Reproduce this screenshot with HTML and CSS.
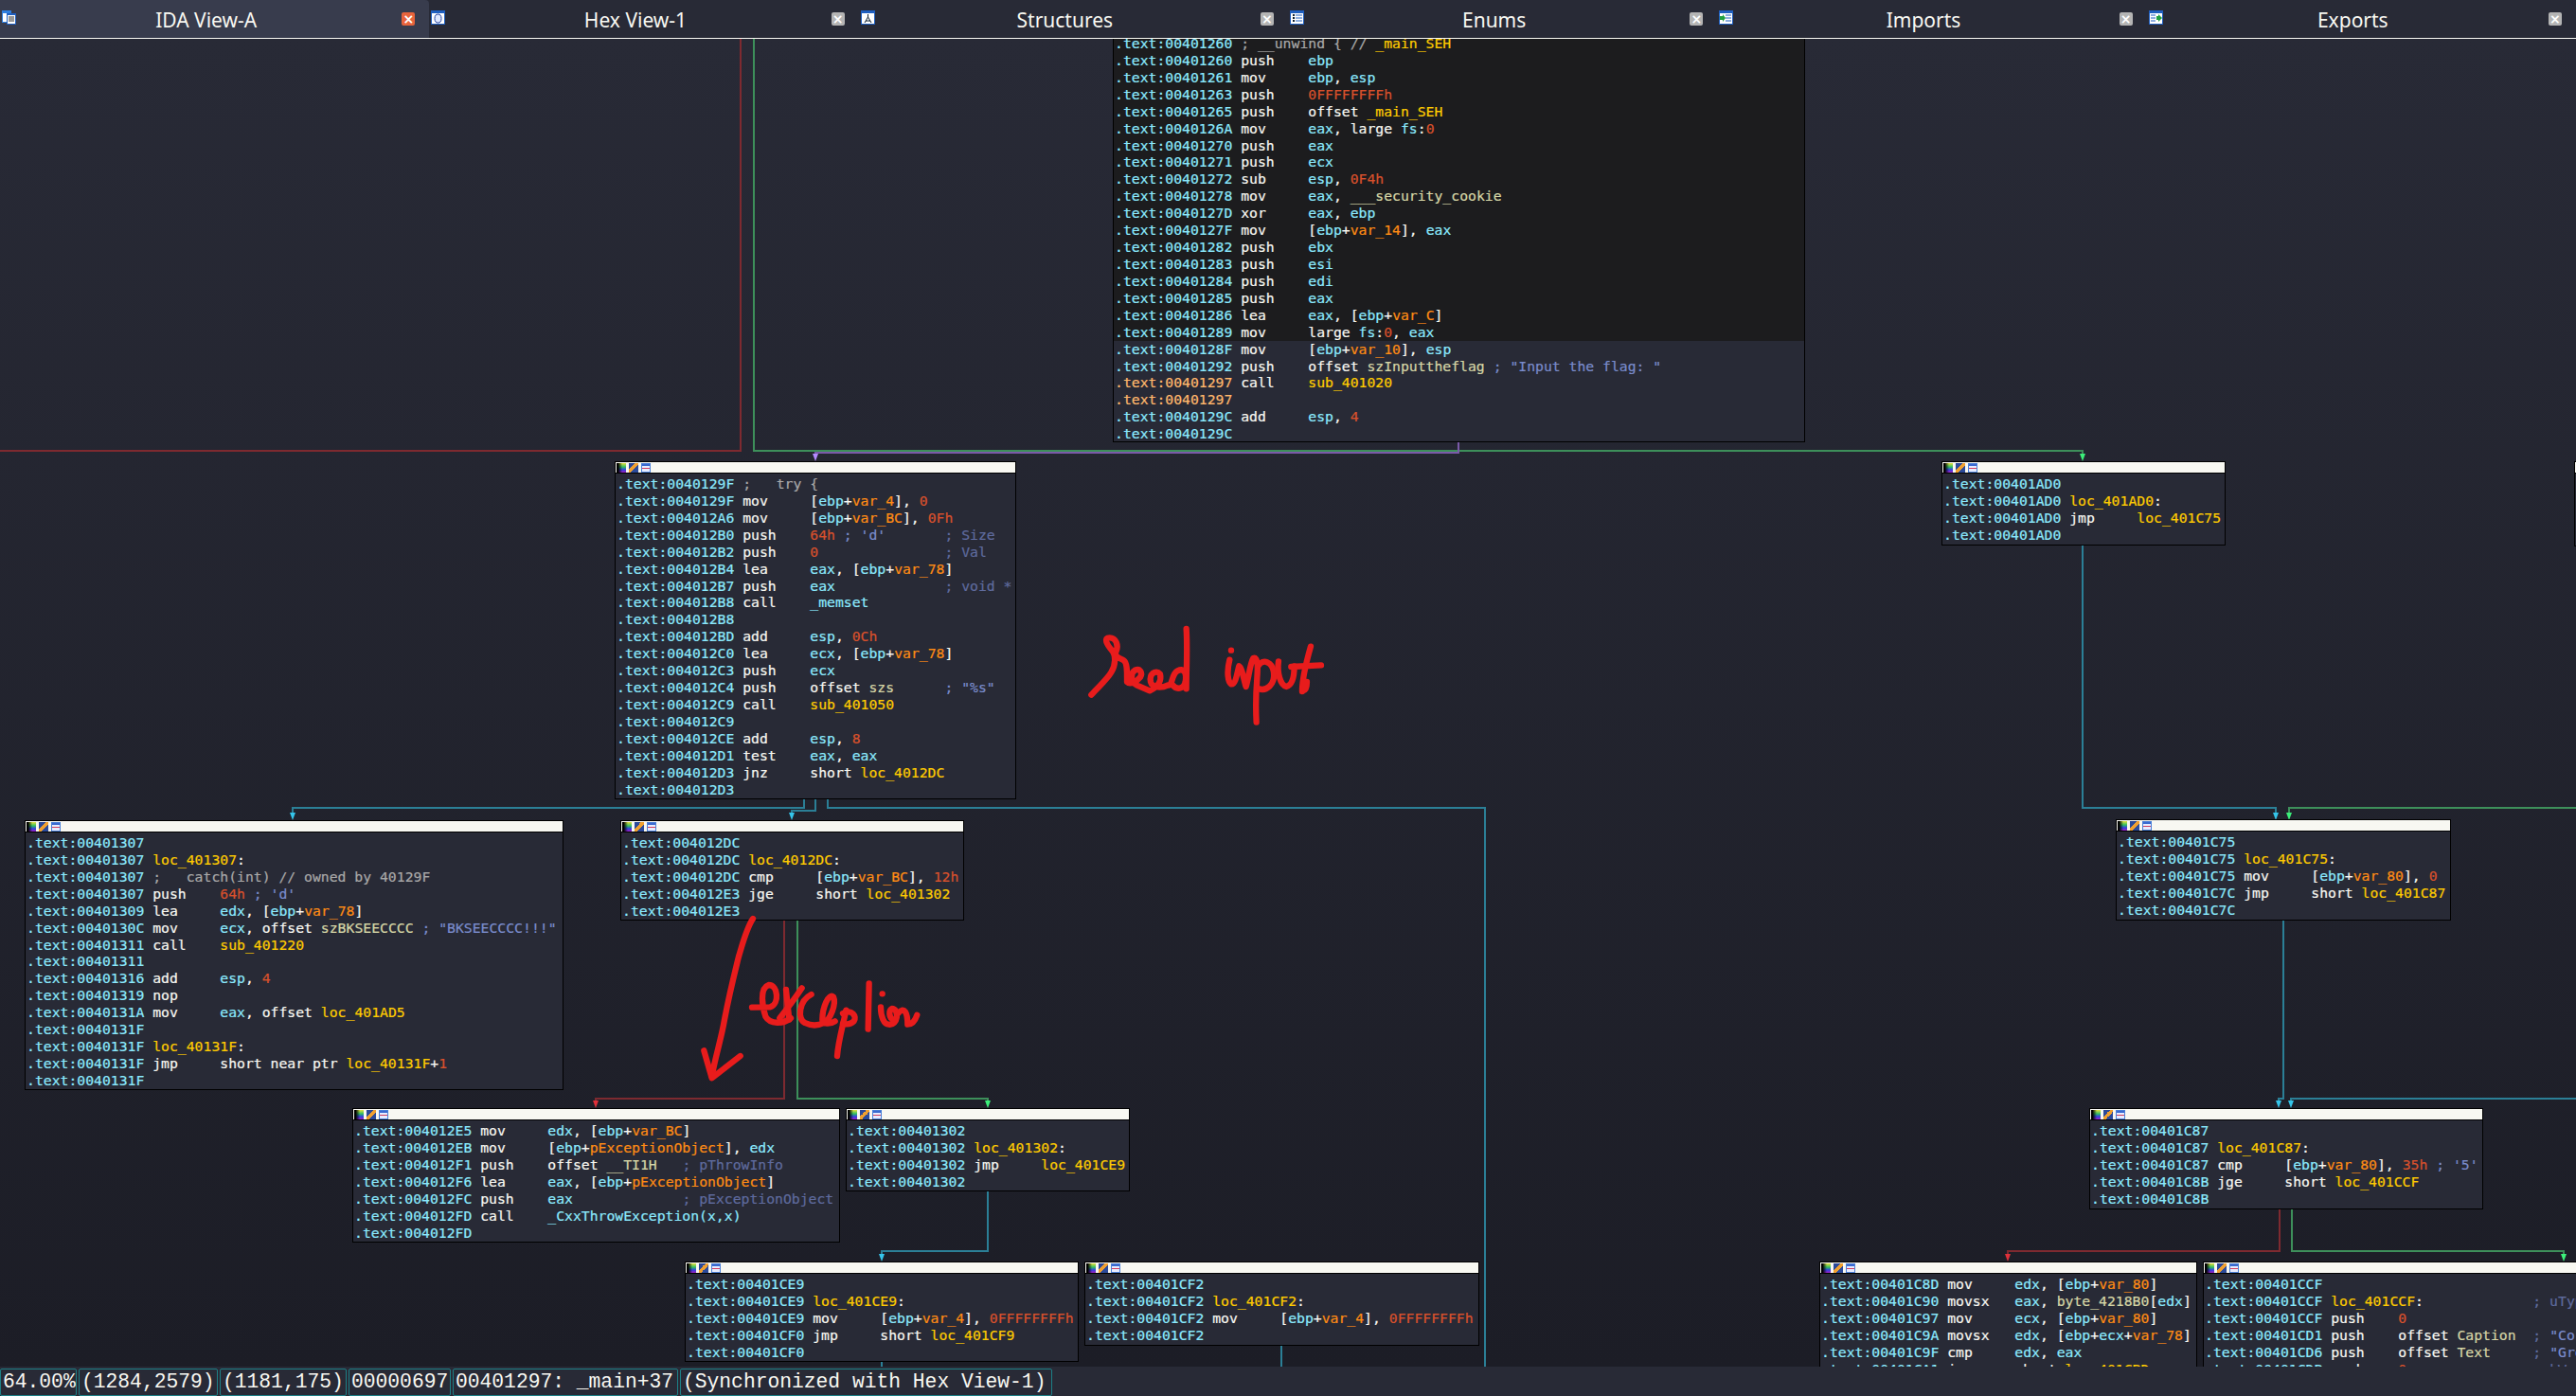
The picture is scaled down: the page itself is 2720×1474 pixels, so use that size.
FILE: index.html
```html
<!DOCTYPE html>
<html>
<head>
    <title>IDA View-A</title>
    <link rel="stylesheet" href="styles.css">
</head>
<body>
    <div class="tabs">
        <div class="tab active">
            <svg class="tab-icon" viewBox="0 0 15 15"><rect x="0" y="0" width="10" height="13" fill="#2f7fe0"/><rect x="1" y="3" width="8" height="9" fill="#fff"/><rect x="5" y="3" width="10" height="12" fill="#1f5fc0"/><rect x="6" y="5" width="8" height="9" fill="#fff"/><path d="M7 7h6M7 9h6M7 11h6" stroke="#333" stroke-width="1"/></svg>
            <span class="tab-title">IDA View-A</span>
            <span class="tab-close">×</span>
        </div>
        <div class="tab">
            <svg class="tab-icon" viewBox="0 0 15 15"><rect width="15" height="15" fill="#1f5fc0"/><rect x="1" y="3" width="13" height="11" fill="#fff"/><ellipse cx="7.5" cy="8.5" rx="3.5" ry="4.5" fill="#dfe8ff" stroke="#1f3fa0"/></svg>
            <span class="tab-title">Hex View-1</span>
            <span class="tab-close">×</span>
        </div>
        <div class="tab">
            <svg class="tab-icon" viewBox="0 0 15 15"><rect width="15" height="15" fill="#1f5fc0"/><rect x="1" y="3" width="13" height="11" fill="#fff"/><path d="M7.5 4v3M4 13l3.5-6 3.500 6M5 11h5" stroke="#123" fill="none"/></svg>
            <span class="tab-title">Structures</span>
            <span class="tab-close">×</span>
        </div>
        <div class="tab">
            <svg class="tab-icon" viewBox="0 0 15 15"><rect width="15" height="15" fill="#1f5fc0"/><rect x="1" y="3" width="13" height="11" fill="#fff"/><path d="M6 5h7M6 8h7M6 11h7" stroke="#1f5fc0"/><rect x="3" y="4" width="2" height="2" fill="#123"/><rect x="3" y="7" width="2" height="2" fill="#123"/><rect x="3" y="10" width="2" height="2" fill="#123"/></svg>
            <span class="tab-title">Enums</span>
            <span class="tab-close">×</span>
        </div>
        <div class="tab">
            <svg class="tab-icon" viewBox="0 0 15 15"><rect width="15" height="15" fill="#1f5fc0"/><rect x="1" y="3" width="13" height="11" fill="#fff"/><path d="M7 5h6M7 8h6M7 11h6" stroke="#1f5fc0"/><path d="M1 6h3V4l3 4-3 4v-2H1z" fill="#20a040"/></svg>
            <span class="tab-title">Imports</span>
            <span class="tab-close">×</span>
        </div>
        <div class="tab">
            <svg class="tab-icon" viewBox="0 0 15 15"><rect width="15" height="15" fill="#1f5fc0"/><rect x="1" y="3" width="13" height="11" fill="#fff"/><path d="M2 5h5M2 8h5M2 11h5" stroke="#1f5fc0"/><path d="M8 6h2V4l4 4-4 4v-2H8z" fill="#20a040"/></svg>
            <span class="tab-title">Exports</span>
            <span class="tab-close">×</span>
        </div>
    </div>

    <div class="graph">
        <!-- edges, drawn in page coordinates -->
        <svg class="layer" viewBox="0 41 2720 1402">
            <g class="edge red">
                <path d="M782 41V476H0"/>
                <path d="M828 972V1160H629V1164"/>
                <path d="M2407 1277V1321H2120V1325"/>
            </g>
            <g class="edge green">
                <path d="M796 41V476H2199V481"/>
                <path d="M842 972V1160H1043V1164"/>
                <path d="M2417 858V853H2720"/>
                <path d="M2420 1277V1321H2707V1325"/>
            </g>
            <g class="edge purple">
                <path d="M1540 467V478H861V481"/>
            </g>
            <g class="edge teal">
                <path d="M849 844V853H309V859"/>
                <path d="M861 844V856H836V860"/>
                <path d="M874 844V853H1568V1443"/>
                <path d="M1043 1258V1321H931V1326"/>
                <path d="M931 1438V1443"/>
                <path d="M1353 1421V1443"/>
                <path d="M2199 576V853H2403V859"/>
                <path d="M2411 972V1160H2406V1164"/>
                <path d="M2419 1164V1160H2720"/>
            </g>
            <g class="head red">
                <path d="M626 1162h6l-3 8z"/>
                <path d="M2117 1324h6l-3 8z"/>
            </g>
            <g class="head green">
                <path d="M2196 479h6l-3 8z"/>
                <path d="M1040 1162h6l-3 8z"/>
                <path d="M2414 858h6l-3 8z"/>
                <path d="M2704 1324h6l-3 8z"/>
            </g>
            <g class="head purple">
                <path d="M858 479h6l-3 8z"/>
            </g>
            <g class="head teal">
                <path d="M306 858h6l-3 8z"/>
                <path d="M833 858h6l-3 8z"/>
                <path d="M928 1324h6l-3 8z"/>
                <path d="M2400 858h6l-3 8z"/>
                <path d="M2403 1162h6l-3 8z"/>
                <path d="M2416 1162h6l-3 8z"/>
            </g>
        </svg>

        <div class="node n-main">
            <div class="code">
                <div class="dim">
<div><i class="a">.text:00401260</i> <i class="g">; __unwind { // </i><i class="l">_main_SEH</i></div>
<div><i class="a">.text:00401260</i> push    <i class="r">ebp</i></div>
<div><i class="a">.text:00401261</i> mov     <i class="r">ebp</i>, <i class="r">esp</i></div>
<div><i class="a">.text:00401263</i> push    <i class="n">0FFFFFFFFh</i></div>
<div><i class="a">.text:00401265</i> push    offset <i class="l">_main_SEH</i></div>
<div><i class="a">.text:0040126A</i> mov     <i class="r">eax</i>, large <i class="r">fs</i>:<i class="n">0</i></div>
<div><i class="a">.text:00401270</i> push    <i class="r">eax</i></div>
<div><i class="a">.text:00401271</i> push    <i class="r">ecx</i></div>
<div><i class="a">.text:00401272</i> sub     <i class="r">esp</i>, <i class="n">0F4h</i></div>
<div><i class="a">.text:00401278</i> mov     <i class="r">eax</i>, <i class="d">___security_cookie</i></div>
<div><i class="a">.text:0040127D</i> xor     <i class="r">eax</i>, <i class="r">ebp</i></div>
<div><i class="a">.text:0040127F</i> mov     [<i class="r">ebp</i>+<i class="v">var_14</i>], <i class="r">eax</i></div>
<div><i class="a">.text:00401282</i> push    <i class="r">ebx</i></div>
<div><i class="a">.text:00401283</i> push    <i class="r">esi</i></div>
<div><i class="a">.text:00401284</i> push    <i class="r">edi</i></div>
<div><i class="a">.text:00401285</i> push    <i class="r">eax</i></div>
<div><i class="a">.text:00401286</i> lea     <i class="r">eax</i>, [<i class="r">ebp</i>+<i class="v">var_C</i>]</div>
<div><i class="a">.text:00401289</i> mov     large <i class="r">fs</i>:<i class="n">0</i>, <i class="r">eax</i></div>
                </div>
<div><i class="a">.text:0040128F</i> mov     [<i class="r">ebp</i>+<i class="v">var_10</i>], <i class="r">esp</i></div>
<div><i class="a">.text:00401292</i> push    offset <i class="d">szInputtheflag</i> <i class="s">; "Input the flag: "</i></div>
<div><i class="o">.text:00401297</i> call    <i class="l">sub_401020</i></div>
<div><i class="o">.text:00401297</i></div>
<div><i class="a">.text:0040129C</i> add     <i class="r">esp</i>, <i class="n">4</i></div>
<div><i class="a">.text:0040129C</i></div>
            </div>
        </div>

        <div class="node n-try">
            <div class="node-head"><span class="hi hi-color"></span><span class="hi hi-pen"></span><span class="hi hi-win"></span></div>
            <div class="code">
<div><i class="a">.text:0040129F</i> <i class="g">;   try {</i></div>
<div><i class="a">.text:0040129F</i> mov     [<i class="r">ebp</i>+<i class="v">var_4</i>], <i class="n">0</i></div>
<div><i class="a">.text:004012A6</i> mov     [<i class="r">ebp</i>+<i class="v">var_BC</i>], <i class="n">0Fh</i></div>
<div><i class="a">.text:004012B0</i> push    <i class="n">64h</i> <i class="s">; 'd'</i>       <i class="c">; Size</i></div>
<div><i class="a">.text:004012B2</i> push    <i class="n">0</i>               <i class="c">; Val</i></div>
<div><i class="a">.text:004012B4</i> lea     <i class="r">eax</i>, [<i class="r">ebp</i>+<i class="v">var_78</i>]</div>
<div><i class="a">.text:004012B7</i> push    <i class="r">eax</i>             <i class="c">; void *</i></div>
<div><i class="a">.text:004012B8</i> call    <i class="r">_memset</i></div>
<div><i class="a">.text:004012B8</i></div>
<div><i class="a">.text:004012BD</i> add     <i class="r">esp</i>, <i class="n">0Ch</i></div>
<div><i class="a">.text:004012C0</i> lea     <i class="r">ecx</i>, [<i class="r">ebp</i>+<i class="v">var_78</i>]</div>
<div><i class="a">.text:004012C3</i> push    <i class="r">ecx</i></div>
<div><i class="a">.text:004012C4</i> push    offset <i class="d">szs</i>      <i class="s">; "%s"</i></div>
<div><i class="a">.text:004012C9</i> call    <i class="l">sub_401050</i></div>
<div><i class="a">.text:004012C9</i></div>
<div><i class="a">.text:004012CE</i> add     <i class="r">esp</i>, <i class="n">8</i></div>
<div><i class="a">.text:004012D1</i> test    <i class="r">eax</i>, <i class="r">eax</i></div>
<div><i class="a">.text:004012D3</i> jnz     short <i class="l">loc_4012DC</i></div>
<div><i class="a">.text:004012D3</i></div>
            </div>
        </div>

        <div class="node n-catch">
            <div class="node-head"><span class="hi hi-color"></span><span class="hi hi-pen"></span><span class="hi hi-win"></span></div>
            <div class="code">
<div><i class="a">.text:00401307</i></div>
<div><i class="a">.text:00401307</i> <i class="l">loc_401307</i>:</div>
<div><i class="a">.text:00401307</i> <i class="g">;   catch(int) // owned by 40129F</i></div>
<div><i class="a">.text:00401307</i> push    <i class="n">64h</i> <i class="s">; 'd'</i></div>
<div><i class="a">.text:00401309</i> lea     <i class="r">edx</i>, [<i class="r">ebp</i>+<i class="v">var_78</i>]</div>
<div><i class="a">.text:0040130C</i> mov     <i class="r">ecx</i>, offset <i class="d">szBKSEECCCC</i> <i class="s">; "BKSEECCCC!!!"</i></div>
<div><i class="a">.text:00401311</i> call    <i class="l">sub_401220</i></div>
<div><i class="a">.text:00401311</i></div>
<div><i class="a">.text:00401316</i> add     <i class="r">esp</i>, <i class="n">4</i></div>
<div><i class="a">.text:00401319</i> nop</div>
<div><i class="a">.text:0040131A</i> mov     <i class="r">eax</i>, offset <i class="l">loc_401AD5</i></div>
<div><i class="a">.text:0040131F</i></div>
<div><i class="a">.text:0040131F</i> <i class="l">loc_40131F</i>:</div>
<div><i class="a">.text:0040131F</i> jmp     short near ptr <i class="l">loc_40131F</i>+<i class="n">1</i></div>
<div><i class="a">.text:0040131F</i></div>
            </div>
        </div>

        <div class="node n-12dc">
            <div class="node-head"><span class="hi hi-color"></span><span class="hi hi-pen"></span><span class="hi hi-win"></span></div>
            <div class="code">
<div><i class="a">.text:004012DC</i></div>
<div><i class="a">.text:004012DC</i> <i class="l">loc_4012DC</i>:</div>
<div><i class="a">.text:004012DC</i> cmp     [<i class="r">ebp</i>+<i class="v">var_BC</i>], <i class="n">12h</i></div>
<div><i class="a">.text:004012E3</i> jge     short <i class="l">loc_401302</i></div>
<div><i class="a">.text:004012E3</i></div>
            </div>
        </div>

        <div class="node n-12e5">
            <div class="node-head"><span class="hi hi-color"></span><span class="hi hi-pen"></span><span class="hi hi-win"></span></div>
            <div class="code">
<div><i class="a">.text:004012E5</i> mov     <i class="r">edx</i>, [<i class="r">ebp</i>+<i class="v">var_BC</i>]</div>
<div><i class="a">.text:004012EB</i> mov     [<i class="r">ebp</i>+<i class="v">pExceptionObject</i>], <i class="r">edx</i></div>
<div><i class="a">.text:004012F1</i> push    offset <i class="d">__TI1H</i>   <i class="c">; pThrowInfo</i></div>
<div><i class="a">.text:004012F6</i> lea     <i class="r">eax</i>, [<i class="r">ebp</i>+<i class="v">pExceptionObject</i>]</div>
<div><i class="a">.text:004012FC</i> push    <i class="r">eax</i>             <i class="c">; pExceptionObject</i></div>
<div><i class="a">.text:004012FD</i> call    <i class="r">_CxxThrowException(x,x)</i></div>
<div><i class="a">.text:004012FD</i></div>
            </div>
        </div>

        <div class="node n-1302">
            <div class="node-head"><span class="hi hi-color"></span><span class="hi hi-pen"></span><span class="hi hi-win"></span></div>
            <div class="code">
<div><i class="a">.text:00401302</i></div>
<div><i class="a">.text:00401302</i> <i class="l">loc_401302</i>:</div>
<div><i class="a">.text:00401302</i> jmp     <i class="l">loc_401CE9</i></div>
<div><i class="a">.text:00401302</i></div>
            </div>
        </div>

        <div class="node n-1ce9">
            <div class="node-head"><span class="hi hi-color"></span><span class="hi hi-pen"></span><span class="hi hi-win"></span></div>
            <div class="code">
<div><i class="a">.text:00401CE9</i></div>
<div><i class="a">.text:00401CE9</i> <i class="l">loc_401CE9</i>:</div>
<div><i class="a">.text:00401CE9</i> mov     [<i class="r">ebp</i>+<i class="v">var_4</i>], <i class="n">0FFFFFFFFh</i></div>
<div><i class="a">.text:00401CF0</i> jmp     short <i class="l">loc_401CF9</i></div>
<div><i class="a">.text:00401CF0</i></div>
            </div>
        </div>

        <div class="node n-1cf2">
            <div class="node-head"><span class="hi hi-color"></span><span class="hi hi-pen"></span><span class="hi hi-win"></span></div>
            <div class="code">
<div><i class="a">.text:00401CF2</i></div>
<div><i class="a">.text:00401CF2</i> <i class="l">loc_401CF2</i>:</div>
<div><i class="a">.text:00401CF2</i> mov     [<i class="r">ebp</i>+<i class="v">var_4</i>], <i class="n">0FFFFFFFFh</i></div>
<div><i class="a">.text:00401CF2</i></div>
            </div>
        </div>

        <div class="node n-1ad0">
            <div class="node-head"><span class="hi hi-color"></span><span class="hi hi-pen"></span><span class="hi hi-win"></span></div>
            <div class="code">
<div><i class="a">.text:00401AD0</i></div>
<div><i class="a">.text:00401AD0</i> <i class="l">loc_401AD0</i>:</div>
<div><i class="a">.text:00401AD0</i> jmp     <i class="l">loc_401C75</i></div>
<div><i class="a">.text:00401AD0</i></div>
            </div>
        </div>

        <div class="node n-edge">
            <div class="node-head"></div>
        </div>

        <div class="node n-1c75">
            <div class="node-head"><span class="hi hi-color"></span><span class="hi hi-pen"></span><span class="hi hi-win"></span></div>
            <div class="code">
<div><i class="a">.text:00401C75</i></div>
<div><i class="a">.text:00401C75</i> <i class="l">loc_401C75</i>:</div>
<div><i class="a">.text:00401C75</i> mov     [<i class="r">ebp</i>+<i class="v">var_80</i>], <i class="n">0</i></div>
<div><i class="a">.text:00401C7C</i> jmp     short <i class="l">loc_401C87</i></div>
<div><i class="a">.text:00401C7C</i></div>
            </div>
        </div>

        <div class="node n-1c87">
            <div class="node-head"><span class="hi hi-color"></span><span class="hi hi-pen"></span><span class="hi hi-win"></span></div>
            <div class="code">
<div><i class="a">.text:00401C87</i></div>
<div><i class="a">.text:00401C87</i> <i class="l">loc_401C87</i>:</div>
<div><i class="a">.text:00401C87</i> cmp     [<i class="r">ebp</i>+<i class="v">var_80</i>], <i class="n">35h</i> <i class="s">; '5'</i></div>
<div><i class="a">.text:00401C8B</i> jge     short <i class="l">loc_401CCF</i></div>
<div><i class="a">.text:00401C8B</i></div>
            </div>
        </div>

        <div class="node n-1c8d">
            <div class="node-head"><span class="hi hi-color"></span><span class="hi hi-pen"></span><span class="hi hi-win"></span></div>
            <div class="code">
<div><i class="a">.text:00401C8D</i> mov     <i class="r">edx</i>, [<i class="r">ebp</i>+<i class="v">var_80</i>]</div>
<div><i class="a">.text:00401C90</i> movsx   <i class="r">eax</i>, <i class="d">byte_4218B0</i>[<i class="r">edx</i>]</div>
<div><i class="a">.text:00401C97</i> mov     <i class="r">ecx</i>, [<i class="r">ebp</i>+<i class="v">var_80</i>]</div>
<div><i class="a">.text:00401C9A</i> movsx   <i class="r">edx</i>, [<i class="r">ebp</i>+<i class="r">ecx</i>+<i class="v">var_78</i>]</div>
<div><i class="a">.text:00401C9F</i> cmp     <i class="r">edx</i>, <i class="r">eax</i></div>
<div><i class="a">.text:00401CA1</i> jnz     short <i class="l">loc_401CBD</i></div>
            </div>
        </div>

        <div class="node n-1ccf">
            <div class="node-head"><span class="hi hi-color"></span><span class="hi hi-pen"></span><span class="hi hi-win"></span></div>
            <div class="code">
<div><i class="a">.text:00401CCF</i></div>
<div><i class="a">.text:00401CCF</i> <i class="l">loc_401CCF</i>:             <i class="c">; uType</i></div>
<div><i class="a">.text:00401CCF</i> push    <i class="n">0</i></div>
<div><i class="a">.text:00401CD1</i> push    offset <i class="d">Caption</i>  <i class="c">; </i><i class="s">"Correct"</i></div>
<div><i class="a">.text:00401CD6</i> push    offset <i class="d">Text</i>     <i class="c">; </i><i class="s">"Great"</i></div>
<div><i class="a">.text:00401CDB</i> push    <i class="n">0</i>               <i class="c">; hWnd</i></div>
            </div>
        </div>

        <!-- the red pen notes on top of everything -->
        <svg class="layer" viewBox="0 41 2720 1402">
            <g class="pen" transform="translate(1050 640) scale(0.3333)">
                <path d="M307 281C330 255 355 235 370 210C385 185 385 155 372 140C355 120 345 100 365 100C385 100 395 125 385 145C378 158 395 165 410 172C422 180 420 215 420 240C430 250 450 240 462 225C470 212 462 195 445 203C430 212 432 240 450 250L492 268C520 255 530 235 525 215C510 200 490 215 495 240C500 260 530 260 550 250C565 255 560 215 580 205C600 195 610 210 605 240C600 265 575 265 565 250"/>
                <path d="M608 72C612 130 608 200 608 262"/>
                <path d="M750 140h.1"/>
                <path d="M745 170C735 210 740 240 750 247C765 250 770 205 775 190C785 195 790 235 797 255C805 230 810 180 820 165C835 160 835 190 832 230C828 280 828 330 830 368"/>
                <path d="M835 190C850 165 880 175 885 210C890 250 860 270 838 262"/>
                <path d="M900 175C895 210 905 250 925 255C945 250 950 220 950 190"/>
                <path d="M1002 128C990 170 975 230 975 270C975 265 990 275 990 240"/>
                <path d="M940 192L1035 187"/>
            </g>
            <g class="pen" transform="translate(700 950) scale(0.3333)">
                <path d="M285 60C265 90 255 130 240 180C225 240 210 300 195 380C185 440 165 500 155 560"/>
                <path d="M130 478L155 565L245 495"/>
                <path d="M282 341L340 340C370 330 365 270 335 270C305 280 315 340 325 370C340 395 380 395 405 375"/>
                <path d="M370 375C390 350 420 310 440 280"/>
                <path d="M390 285L400 380"/>
                <path d="M470 300C430 320 425 380 450 390C470 400 490 400 510 390C530 380 550 330 540 308C525 295 505 340 505 380C505 395 530 395 545 385"/>
                <path d="M580 350C570 400 555 450 552 495"/>
                <path d="M570 360C600 345 615 370 605 385C595 395 580 395 570 392"/>
                <path d="M653 265L650 410"/>
                <path d="M695 298h.1"/>
                <path d="M690 340C690 370 700 395 715 395C745 400 750 345 725 345C715 350 715 375 730 380"/>
                <path d="M745 360C765 335 775 360 775 395C790 395 800 380 805 365"/>
            </g>
        </svg>
    </div>

    <div class="status">
        <span class="seg seg-zoom">64.00%</span>
        <span class="seg seg-pos">(1284,2579)</span>
        <span class="seg seg-size">(1181,175)</span>
        <span class="seg seg-off">00000697</span>
        <span class="seg seg-addr">00401297: _main+37</span>
        <span class="seg seg-sync">(Synchronized with Hex View-1)</span>
    </div>
</body>
</html>
```

FILE: styles.css
```css
html, body {
    margin: 0;
    height: 100%;
    overflow: hidden;
}
body {
    display: flex;
    flex-direction: column;
    background: #282a36;
    color: #f8f8f2;
}

/* tab bar */
.tabs {
    display: flex;
    height: 41px;
    flex: none;
    box-sizing: border-box;
    border-bottom: 1px solid #f8f8f2;
    background: #282a36;
}
.tab {
    flex: 1;
    display: flex;
    align-items: flex-start;
    padding: 0 15px 0 2px;
}
.tab.active {
    background: #383c4d;
    border-top-right-radius: 4px;
}
.tab-icon {
    width: 15px;
    height: 15px;
    margin-top: 11px;
    flex: none;
}
.tab-title {
    flex: 1;
    padding-right: 6px;
    text-align: center;
    font: 21px/42px "Noto Sans", sans-serif;
}
.tab-close {
    width: 14px;
    height: 14px;
    margin-top: 13px;
    border-radius: 2px;
    background: #b4b4b4;
    color: #fff;
    font: bold 14px/14px "DejaVu Sans", sans-serif;
    text-align: center;
}
.active .tab-close {
    background: #e8643c;
}

/* graph area */
.graph {
    flex: 1;
    position: relative;
    overflow: hidden;
    background: linear-gradient(#282a36, #1c1d26);
}
.layer {
    position: absolute;
    left: 0;
    top: 0;
    width: 2720px;
    height: 1402px;
}
.edge path {
    fill: none;
    stroke-width: 2;
    shape-rendering: crispEdges;
}
.edge.red path { stroke: #7e2a30; }
.edge.green path { stroke: #3d8f5a; }
.edge.purple path { stroke: #7a5aa8; }
.edge.teal path { stroke: #2b7f96; }
.head.red path { fill: #e0303a; }
.head.green path { fill: #3cf07a; }
.head.purple path { fill: #b48aff; }
.head.teal path { fill: #35c5ea; }
.pen path {
    fill: none;
    stroke: #e81c1c;
    stroke-width: 19;
    stroke-linecap: round;
    stroke-linejoin: round;
}

/* flow chart nodes */
.node {
    position: absolute;
    box-sizing: border-box;
    overflow: hidden;
    border: 1px solid #000;
    background: #282a36;
}
.node-head {
    display: flex;
    gap: 3px;
    height: 12px;
    box-sizing: border-box;
    padding: 1px 0 0 1px;
    border-bottom: 1px solid #000;
    background: #f8f8f2;
}
.hi {
    width: 10px;
    height: 10px;
    box-sizing: border-box;
}
.hi-color {
    background: linear-gradient(to right, #000 15%, rgba(0, 0, 0, 0) 60%), linear-gradient(#e8e040, #30c060 40%, #3040e0 70%, #a020c0);
}
.hi-pen {
    background: linear-gradient(135deg, transparent 35%, #f0a030 35% 60%, transparent 60%), #2b4a9a;
}
.hi-win {
    border: 1px solid #4a80d8;
    background: linear-gradient(#3a6ad0 0 20%, #e8ecff 20% 45%, #d04060 45% 65%, #e8ecff 65%);
}
.code {
    padding: 2px 0 0 1px;
    font: 14.76px/17.92px "DejaVu Sans Mono", monospace;
    -webkit-text-stroke: 0.2px;
}
.code div {
    white-space: pre;
}
.code .dim {
    white-space: normal;
    margin: -1px 0 0 -1px;
    padding: 1px 0 0 1px;
    background: #1c1c1e;
}
.code i { font-style: normal; }
.a { color: #8be9fd; }
.o { color: #ffb86c; }
.r { color: #8be9fd; }
.v { color: #ff8c14; }
.n { color: #d9512c; }
.l { color: #ffcc00; }
.d { color: #d6d6a6; }
.c { color: #5f6b9e; }
.s { color: #7a8ccc; }
.g { color: #a8a8a8; }

.n-main { left: 1175px; top: -6px; width: 731px; height: 432px; border-top: 0; }
.n-try { left: 649px; top: 446px; width: 424px; height: 357px; }
.n-catch { left: 26px; top: 825px; width: 569px; height: 285px; }
.n-12dc { left: 655px; top: 825px; width: 363px; height: 106px; }
.n-12e5 { left: 372px; top: 1129px; width: 515px; height: 142px; }
.n-1302 { left: 893px; top: 1129px; width: 300px; height: 88px; }
.n-1ce9 { left: 723px; top: 1291px; width: 416px; height: 106px; }
.n-1cf2 { left: 1145px; top: 1291px; width: 417px; height: 89px; }
.n-1ad0 { left: 2050px; top: 446px; width: 300px; height: 89px; }
.n-edge { left: 2718px; top: 446px; width: 40px; height: 90px; }
.n-1c75 { left: 2234px; top: 824px; width: 354px; height: 107px; }
.n-1c87 { left: 2206px; top: 1129px; width: 416px; height: 107px; }
.n-1c8d { left: 1921px; top: 1291px; width: 399px; height: 140px; }
.n-1ccf { left: 2326px; top: 1291px; width: 420px; height: 140px; }

/* status bar */
.status {
    display: flex;
    flex: none;
    height: 31px;
    box-sizing: border-box;
    gap: 2px;
    padding-top: 2px;
    background: #282a36;
}
.seg {
    box-sizing: border-box;
    flex: none;
    padding: 0 2px;
    border: 1px solid #1d7f86;
    border-radius: 2px;
    font: 21.3px/27px "Liberation Mono", monospace;
    white-space: pre;
    overflow: hidden;
}
.seg-zoom { width: 81px; }
.seg-pos { width: 147px; }
.seg-size { width: 134px; }
.seg-off { width: 108px; }
.seg-addr { width: 238px; }
.seg-sync { width: 393px; }
```
